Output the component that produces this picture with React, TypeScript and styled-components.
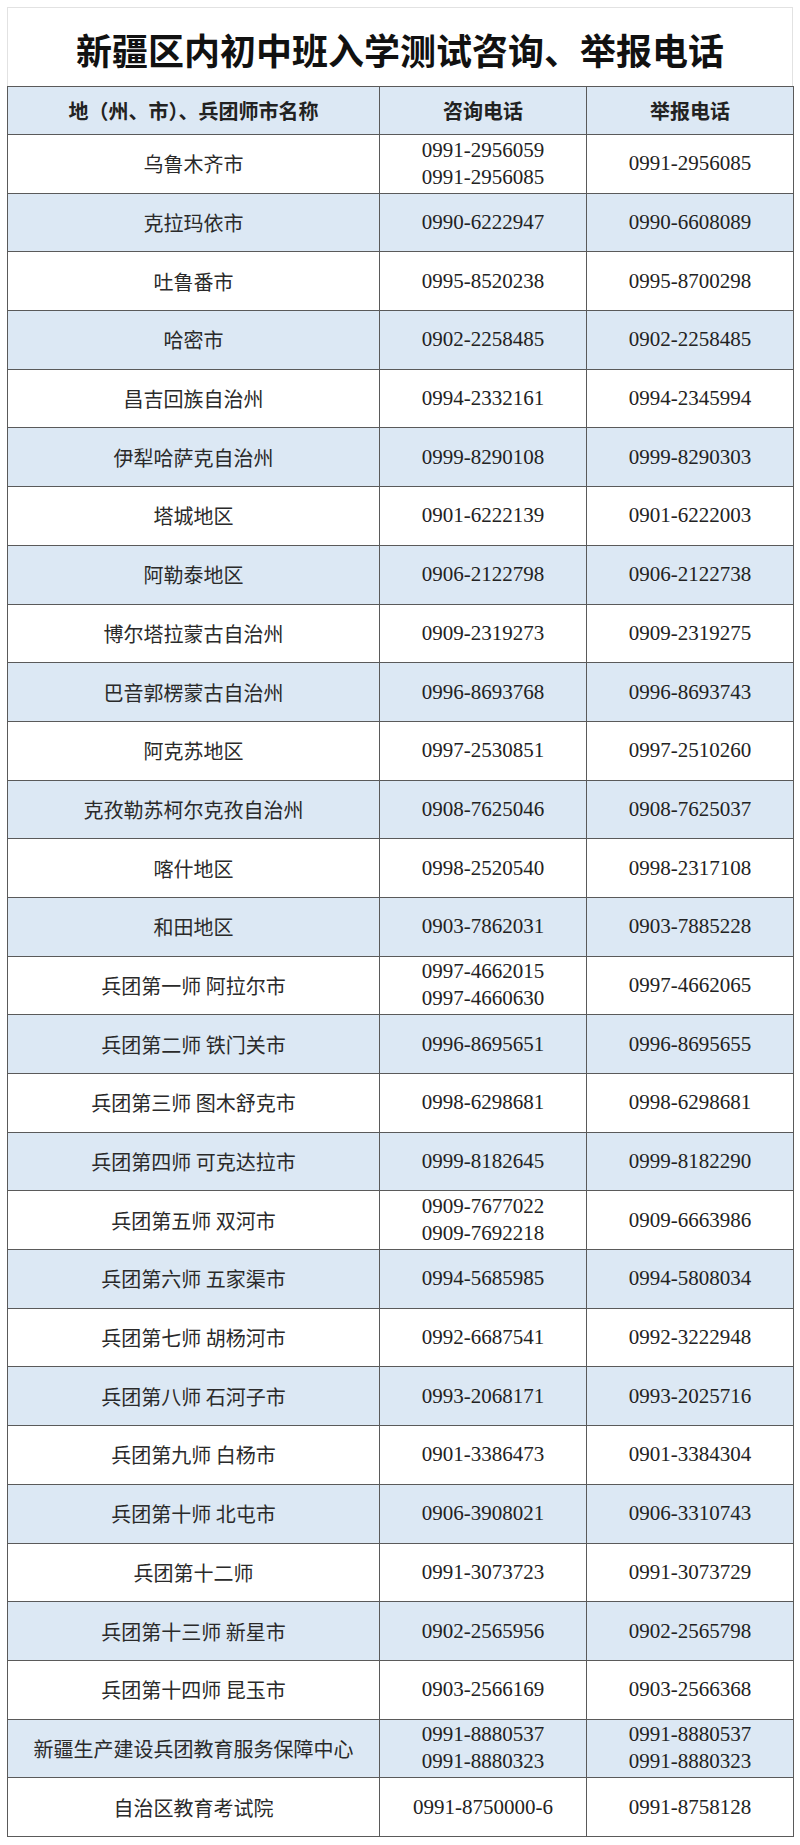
import React from "react";
import styled, { createGlobalStyle } from "styled-components";

const GlobalStyle = createGlobalStyle`
  html, body {
    margin: 0;
    padding: 0;
    background: #ffffff;
  }
`;

const blue = "#dce8f4";
const line = "#5a5a5a";

const Page = styled.div`
  padding: 7px 7px 9px 7px;
  width: 786px;
`;

const Title = styled.h1`
  margin: 0;
  height: 79px;
  box-sizing: border-box;
  border: 1px solid #e2e2e2;
  border-bottom: none;
  display: flex;
  align-items: center;
  justify-content: center;
  padding-top: 4px;
  font-family: "Noto Sans CJK SC", sans-serif;
  font-size: 36px;
  font-weight: 700;
  color: #111;
  letter-spacing: 0;
`;

const Table = styled.table`
  width: 786px;
  border-collapse: collapse;
  table-layout: fixed;
  border: 1.5px solid ${line};
`;

const Row = styled.tr<{ $shade?: boolean; $h: number }>`
  height: ${(p) => p.$h}px;
  background: ${(p) => (p.$shade ? blue : "#ffffff")};
`;

const HeadCell = styled.th`
  border: 1px solid ${line};
  padding: 0;
  text-align: center;
  font-family: "Noto Sans CJK SC", sans-serif;
  font-size: 20px;
  font-weight: 600;
  color: #222;
`;

const NameCell = styled.td`
  border: 1px solid ${line};
  padding: 0;
  text-align: center;
  font-family: "Noto Sans CJK SC", sans-serif;
  font-size: 20px;
  font-weight: 400;
  color: #2a2a2a;
  white-space: nowrap;
`;

const PhoneCell = styled.td`
  border: 1px solid ${line};
  padding: 0;
  text-align: center;
  font-family: "Liberation Serif", "Times New Roman", serif;
  font-size: 21px;
  line-height: 27px;
  color: #222;
`;

const PhoneLine = styled.div`
  white-space: nowrap;
`;

type Entry = { name: string; ask: string[]; report: string[] };

const rows: Entry[] = [
  { name: "乌鲁木齐市", ask: ["0991-2956059", "0991-2956085"], report: ["0991-2956085"] },
  { name: "克拉玛依市", ask: ["0990-6222947"], report: ["0990-6608089"] },
  { name: "吐鲁番市", ask: ["0995-8520238"], report: ["0995-8700298"] },
  { name: "哈密市", ask: ["0902-2258485"], report: ["0902-2258485"] },
  { name: "昌吉回族自治州", ask: ["0994-2332161"], report: ["0994-2345994"] },
  { name: "伊犁哈萨克自治州", ask: ["0999-8290108"], report: ["0999-8290303"] },
  { name: "塔城地区", ask: ["0901-6222139"], report: ["0901-6222003"] },
  { name: "阿勒泰地区", ask: ["0906-2122798"], report: ["0906-2122738"] },
  { name: "博尔塔拉蒙古自治州", ask: ["0909-2319273"], report: ["0909-2319275"] },
  { name: "巴音郭楞蒙古自治州", ask: ["0996-8693768"], report: ["0996-8693743"] },
  { name: "阿克苏地区", ask: ["0997-2530851"], report: ["0997-2510260"] },
  { name: "克孜勒苏柯尔克孜自治州", ask: ["0908-7625046"], report: ["0908-7625037"] },
  { name: "喀什地区", ask: ["0998-2520540"], report: ["0998-2317108"] },
  { name: "和田地区", ask: ["0903-7862031"], report: ["0903-7885228"] },
  { name: "兵团第一师 阿拉尔市", ask: ["0997-4662015", "0997-4660630"], report: ["0997-4662065"] },
  { name: "兵团第二师 铁门关市", ask: ["0996-8695651"], report: ["0996-8695655"] },
  { name: "兵团第三师 图木舒克市", ask: ["0998-6298681"], report: ["0998-6298681"] },
  { name: "兵团第四师 可克达拉市", ask: ["0999-8182645"], report: ["0999-8182290"] },
  { name: "兵团第五师 双河市", ask: ["0909-7677022", "0909-7692218"], report: ["0909-6663986"] },
  { name: "兵团第六师 五家渠市", ask: ["0994-5685985"], report: ["0994-5808034"] },
  { name: "兵团第七师 胡杨河市", ask: ["0992-6687541"], report: ["0992-3222948"] },
  { name: "兵团第八师 石河子市", ask: ["0993-2068171"], report: ["0993-2025716"] },
  { name: "兵团第九师 白杨市", ask: ["0901-3386473"], report: ["0901-3384304"] },
  { name: "兵团第十师 北屯市", ask: ["0906-3908021"], report: ["0906-3310743"] },
  { name: "兵团第十二师", ask: ["0991-3073723"], report: ["0991-3073729"] },
  { name: "兵团第十三师 新星市", ask: ["0902-2565956"], report: ["0902-2565798"] },
  { name: "兵团第十四师 昆玉市", ask: ["0903-2566169"], report: ["0903-2566368"] },
  { name: "新疆生产建设兵团教育服务保障中心", ask: ["0991-8880537", "0991-8880323"], report: ["0991-8880537", "0991-8880323"] },
  { name: "自治区教育考试院", ask: ["0991-8750000-6"], report: ["0991-8758128"] },
];

const Phones = ({ list }: { list: string[] }) => (
  <PhoneCell>
    {list.map((p) => (
      <PhoneLine key={p}>{p}</PhoneLine>
    ))}
  </PhoneCell>
);

export default function App() {
  return (
    <>
      <GlobalStyle />
      <Page>
        <Title>新疆区内初中班入学测试咨询、举报电话</Title>
        <Table>
          <colgroup>
            <col style={{ width: 372 }} />
            <col style={{ width: 207 }} />
            <col style={{ width: 207 }} />
          </colgroup>
          <thead>
            <Row $shade $h={48}>
              <HeadCell>地（州、市）、兵团师市名称</HeadCell>
              <HeadCell>咨询电话</HeadCell>
              <HeadCell>举报电话</HeadCell>
            </Row>
          </thead>
          <tbody>
            {rows.map((r, i) => (
              <Row key={r.name} $shade={i % 2 === 1} $h={58.7}>
                <NameCell>{r.name}</NameCell>
                <Phones list={r.ask} />
                <Phones list={r.report} />
              </Row>
            ))}
          </tbody>
        </Table>
      </Page>
    </>
  );
}
